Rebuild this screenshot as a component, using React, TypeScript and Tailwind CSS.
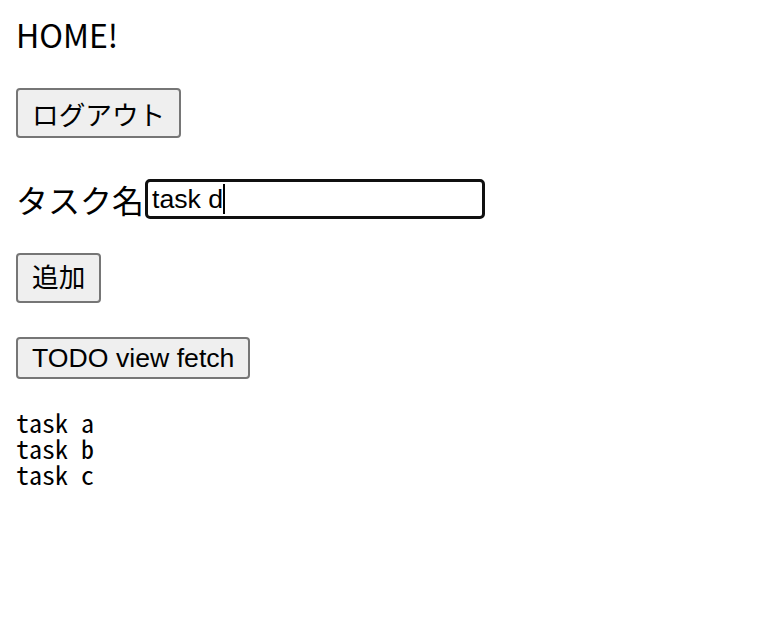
import { useState } from 'react';

const jp = "font-['Noto_Sans_CJK_JP','Noto_Sans',sans-serif]";
const btn =
  "font-['Liberation_Sans','Noto_Sans_CJK_JP',sans-serif] text-[26.67px] text-black bg-[#efefef] border-2 border-[#767676] rounded-[4px] px-[14px] flex items-center";

export default function App() {
  const [task] = useState('task d');
  const todos = ['task a', 'task b', 'task c'];

  return (
    <div className="min-h-screen bg-white px-4 flex flex-col items-start text-black">
      {/* title */}
      <div className={`${jp} mt-[11px] text-[32px] leading-[46px]`}>HOME!</div>

      <button className={`${btn} mt-[31px] h-[50px] pt-[5px]`}>ログアウト</button>

      {/* task input row */}
      <div className="mt-[38px] flex items-center h-[46px]">
        <span className={`${jp} text-[32px] leading-[46px]`}>タスク名</span>
        <div className="ml-[1px] w-[340px] h-[40px] border-[3px] border-[#101010] rounded-[5px] flex items-center pl-[4px]">
          <span className="font-['Liberation_Sans',sans-serif] text-[26.67px] leading-[30px]">{task}</span>
          <span className="w-[2px] h-[30px] bg-black" />
        </div>
      </div>

      <button className={`${btn} mt-[31px] h-[50px]`}>追加</button>

      <button className={`${btn} mt-[34px] h-[42px]`}>TODO view fetch</button>

      {/* list */}
      <div className="mt-[30px] font-['Noto_Sans_Mono_CJK_JP','DejaVu_Sans_Mono',monospace] text-[26px] leading-[26px]">
        {todos.map(t => (
          <div key={t}>{t}</div>
        ))}
      </div>
    </div>
  );
}
